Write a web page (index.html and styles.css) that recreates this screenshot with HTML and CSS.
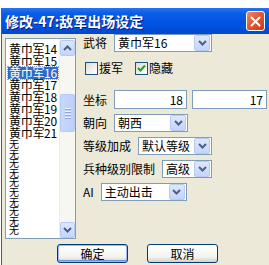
FILE: index.html
```html
<!DOCTYPE html>
<html lang="zh">
<head>
    <meta charset="UTF-8">
    <title>修改-47:敌军出场设定</title>
    <link rel="stylesheet" href="styles.css">
</head>
<body>
    <div class="window">
        <div class="titlebar">
            <span class="title">修改-47:敌军出场设定</span>
            <span class="close">
                <svg width="11" height="11" viewBox="0 0 11 11"><path d="M1.5 1.5 L9.5 9.5 M9.5 1.5 L1.5 9.5" stroke="#fff" stroke-width="2" stroke-linecap="round"/></svg>
            </span>
        </div>
        <div class="client">
            <div class="main">
                <div class="listbox">
                    <ul class="items">
                        <li><span>黄巾军14</span></li>
                        <li><span>黄巾军15</span></li>
                        <li class="sel"><span>黄巾军16</span></li>
                        <li><span>黄巾军17</span></li>
                        <li><span>黄巾军18</span></li>
                        <li><span>黄巾军19</span></li>
                        <li><span>黄巾军20</span></li>
                        <li><span>黄巾军21</span></li>
                        <li class="none"><span>无</span></li>
                        <li class="none"><span>无</span></li>
                        <li class="none"><span>无</span></li>
                        <li class="none"><span>无</span></li>
                        <li class="none"><span>无</span></li>
                        <li class="none"><span>无</span></li>
                        <li class="none"><span>无</span></li>
                        <li class="none"><span>无</span></li>
                        <li class="none"><span>无</span></li>
                        <li class="none"><span>无</span></li>
                    </ul>
                    <div class="vscroll">
                        <span class="sbtn"><svg width="9" height="6" viewBox="0 0 9 6"><path d="M1 5 L4.5 1.5 L8 5" fill="none" stroke="#4d6185" stroke-width="2"/></svg></span>
                        <span class="track"><span class="thumb"><i></i><i></i><i></i><i></i></span></span>
                        <span class="sbtn"><svg width="9" height="6" viewBox="0 0 9 6"><path d="M1 1 L4.5 4.5 L8 1" fill="none" stroke="#4d6185" stroke-width="2"/></svg></span>
                    </div>
                </div>

                <div class="form">
                    <div class="row">
                        <span class="lbl">武将</span>
                        <div class="combo w-general"><span class="val">黄巾军16</span><span class="drop"><svg width="9" height="6" viewBox="0 0 9 6"><path d="M1 1 L4.5 4.5 L8 1" fill="none" stroke="#4d6185" stroke-width="2"/></svg></span></div>
                    </div>
                    <div class="row checks">
                        <span class="check"><span class="box"></span>援军</span>
                        <span class="check"><span class="box"><svg width="9" height="9" viewBox="0 0 9 9"><path d="M1 4 L3.5 6.5 L8 1.5" fill="none" stroke="#21a121" stroke-width="2"/></svg></span>隐藏</span>
                    </div>
                    <div class="row coords">
                        <span class="lbl">坐标</span>
                        <span class="edit w-x">18</span>
                        <span class="edit w-y">17</span>
                    </div>
                    <div class="row">
                        <span class="lbl">朝向</span>
                        <div class="combo w-dir"><span class="val">朝西</span><span class="drop"><svg width="9" height="6" viewBox="0 0 9 6"><path d="M1 1 L4.5 4.5 L8 1" fill="none" stroke="#4d6185" stroke-width="2"/></svg></span></div>
                    </div>
                    <div class="row">
                        <span class="lbl">等级加成</span>
                        <div class="combo w-level"><span class="val">默认等级</span><span class="drop"><svg width="9" height="6" viewBox="0 0 9 6"><path d="M1 1 L4.5 4.5 L8 1" fill="none" stroke="#4d6185" stroke-width="2"/></svg></span></div>
                    </div>
                    <div class="row">
                        <span class="lbl">兵种级别限制</span>
                        <div class="combo w-limit"><span class="val">高级</span><span class="drop"><svg width="9" height="6" viewBox="0 0 9 6"><path d="M1 1 L4.5 4.5 L8 1" fill="none" stroke="#4d6185" stroke-width="2"/></svg></span></div>
                    </div>
                    <div class="row">
                        <span class="lbl">AI</span>
                        <div class="combo w-ai"><span class="val">主动出击</span><span class="drop"><svg width="9" height="6" viewBox="0 0 9 6"><path d="M1 1 L4.5 4.5 L8 1" fill="none" stroke="#4d6185" stroke-width="2"/></svg></span></div>
                    </div>
                </div>
            </div>

            <div class="buttons">
                <span class="btn default">确定</span>
                <span class="btn">取消</span>
            </div>
        </div>
    </div>
</body>
</html>
```

FILE: styles.css
```css
body{
    margin: 0;
    background-color: #ffffff;
    font-family: "Noto Sans CJK SC", "Liberation Sans", sans-serif;
    font-size: 12px;
    color: #000000;
    white-space: nowrap;
}
.window{
    margin-top: 8px;
    margin-left: 1px;
    border-left: 1px solid #5a5a5a;
    height: 257px;
    overflow: hidden;
}
.titlebar{
    display: flex;
    align-items: center;
    justify-content: space-between;
    height: 26px;
    padding: 0 4px 0 3px;
    background: linear-gradient(#2a74f0, #0a5de6 20%, #0054e3 60%, #0049cc);
}
.title{
    color: #ffffff;
    font-weight: bold;
    font-size: 14px;
    line-height: 15px;
    text-shadow: 1px 1px #0a1a80;
}
.close{
    display: flex;
    align-items: center;
    justify-content: center;
    width: 17px;
    height: 18px;
    border: 1px solid #ffffff;
    border-radius: 3px;
    background: linear-gradient(135deg, #ec8a68, #e05a36 45%, #c63d1a);
}
.client{
    background-color: #ece9d8;
    height: 231px;
}
.main{
    display: flex;
    padding-left: 3px;
}
.listbox{
    display: flex;
    flex-shrink: 0;
    width: 69px;
    height: 199px;
    margin-top: 4px;
    border: 1px solid #7f9db9;
    background: #ffffff;
    overflow: hidden;
}
.items{
    flex: 1;
    min-width: 0;
    list-style: none;
    margin: 0;
    padding: 4px 0 0 2px;
    line-height: 12px;
    overflow: hidden;
}
.items li{
    height: 12px;
}
.items li span{
    display: inline-block;
    padding: 0 1px;
    letter-spacing: -0.3px;
}
/* 빈 칸은 원본처럼 촘촘하게 */
.items li.none{
    height: 9.6px;
    font-size: 10px;
    line-height: 10px;
}
.items .sel span{
    background: #316ac5;
    color: #ffffff;
    outline: 1px dotted #8aa6d8;
}
.vscroll{
    display: flex;
    flex-direction: column;
    flex-shrink: 0;
    width: 15px;
    padding-top: 1px;
    background: #f7f6f1;
    border-left: 1px solid #eeede5;
}
.sbtn{
    display: flex;
    align-items: center;
    justify-content: center;
    height: 14px;
    border: 1px solid #b8c9f2;
    border-radius: 2px;
    background: linear-gradient(#dde8fe, #c4d5fb);
}
.track{
    flex: 1;
    padding-top: 38px;
}
.thumb{
    display: flex;
    flex-direction: column;
    align-items: center;
    justify-content: center;
    gap: 1px;
    height: 36px;
    border: 1px solid #b8c9f2;
    border-radius: 2px;
    background: linear-gradient(90deg, #c8d8fc, #bccffb);
}
.thumb i{
    width: 6px;
    height: 1px;
    background: #eef3ff;
    border-bottom: 1px solid #8fa9e0;
}
.form{
    display: flex;
    flex-direction: column;
    gap: 5px;
    margin-left: 7px;
}
.row{
    display: flex;
    align-items: center;
    height: 18px;
    line-height: 14px;
}
.row > *{
    flex-shrink: 0;
}
.lbl{
    margin-right: 7px;
}
.checks{
    height: 28px;
    align-items: flex-start;
    padding-top: 4px;
    box-sizing: border-box;
    gap: 12px;
    padding-left: 2px;
}
.check{
    display: flex;
    align-items: center;
    gap: 1px;
}
.box{
    display: flex;
    align-items: center;
    justify-content: center;
    width: 11px;
    height: 11px;
    border: 1px solid #1c5180;
    background: linear-gradient(135deg, #dcdcd7, #ffffff);
}
.coords{
    height: 19px;
}
.combo, .edit{
    display: flex;
    align-items: center;
    box-sizing: border-box;
    height: 18px;
    border: 1px solid #7f9db9;
    background: #ffffff;
}
.val{
    flex: 1;
    padding-left: 3px;
}
.drop{
    display: flex;
    align-items: center;
    justify-content: center;
    width: 14px;
    height: 14px;
    margin-right: 1px;
    border: 1px solid #b8c9f2;
    border-radius: 2px;
    background: linear-gradient(#dde8fe, #c4d5fb);
}
.edit{
    justify-content: flex-end;
    padding-right: 3px;
    height: 19px;
}
.w-general{ width: 98px; }
.w-x{ width: 73px; margin-right: 5px; }
.w-y{ width: 75px; }
.w-dir{ width: 74px; }
.w-level{ width: 74px; }
.w-limit{ width: 50px; }
.w-ai{ width: 86px; }
.buttons{
    display: flex;
    gap: 19px;
    padding-left: 55px;
    margin-top: 5px;
}
.btn{
    display: flex;
    align-items: center;
    justify-content: center;
    box-sizing: border-box;
    width: 71px;
    height: 19px;
    border: 1px solid #003c74;
    border-radius: 3px;
    background: linear-gradient(#ffffff, #f3f3ee 70%, #d6d0c5);
    line-height: 14px;
}
.btn.default{
    box-shadow: inset 0 0 0 1px #9db8ef, inset 0 -1px 0 1px #6b93e0;
}
```
